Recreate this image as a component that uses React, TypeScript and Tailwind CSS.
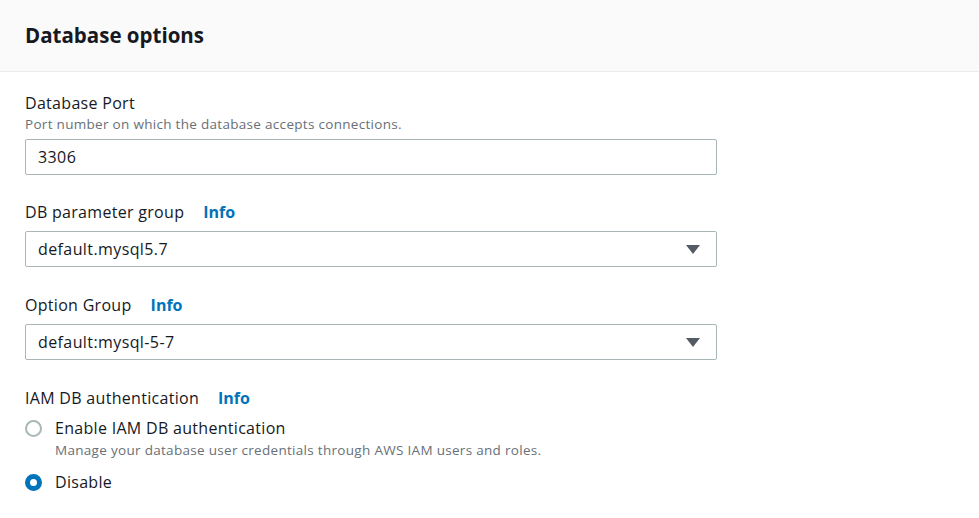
function Info() {
  return <span className="ml-[19px] font-bold tracking-normal text-[#0073bb]">Info</span>;
}

function Select({ value }: { value: string }) {
  return (
    <div className="flex h-[36px] w-[692px] items-center justify-between rounded-[2px] border border-[#aab7b8] bg-white pl-[12px] pr-[16px] text-[16px] tracking-[0.4px] text-[#16191f]">
      <span>{value}</span>
      <svg width="14" height="9" viewBox="0 0 14 9">
        <path d="M0 0h14L7 9z" fill="#545b64" />
      </svg>
    </div>
  );
}

export default function App() {
  const font = { fontFamily: '"Open Sans", "Liberation Sans", sans-serif' };
  return (
    <div className="min-h-screen w-[979px] bg-white" style={font}>
      <div className="flex h-[72px] items-center border-b border-[#eaeded] bg-[#fafafa] px-[25px]">
        <h2 className="text-[20.5px] font-bold text-[#16191f]">Database options</h2>
      </div>

      <div className="px-[25px] pt-[19px] text-[#16191f]">
        <div className="text-[16px] leading-[24px] tracking-[0.3px]">Database Port</div>
        <div className="text-[13.5px] leading-[18px] tracking-[0.3px] text-[#687078]">
          Port number on which the database accepts connections.
        </div>
        <div className="mt-[6px] flex h-[36px] w-[692px] items-center rounded-[2px] border border-[#aab7b8] px-[12px] text-[16px] tracking-[0.4px]">
          3306
        </div>

        <div className="mt-[25px] text-[16px] leading-[24px] tracking-[0.3px]">
          DB parameter group
          <Info />
        </div>
        <div className="mt-[7px]">
          <Select value="default.mysql5.7" />
        </div>

        <div className="mt-[26px] text-[16px] leading-[24px] tracking-[0.3px]">
          Option Group
          <Info />
        </div>
        <div className="mt-[7px]">
          <Select value="default:mysql-5-7" />
        </div>

        <div className="mt-[26px] text-[16px] leading-[24px] tracking-[0.3px]">
          IAM DB authentication
          <Info />
        </div>

        <div className="mt-[6px] flex items-start gap-[13px]">
          <span className="mt-[4px] h-[17px] w-[17px] shrink-0 rounded-full border-2 border-[#aab7b8] bg-white" />
          <div>
            <div className="text-[16px] leading-[24px] tracking-[0.3px]">Enable IAM DB authentication</div>
            <div className="text-[13.5px] leading-[20px] tracking-[0.3px] text-[#687078]">
              Manage your database user credentials through AWS IAM users and roles.
            </div>
          </div>
        </div>

        <div className="mt-[10px] flex items-start gap-[13px]">
          <span className="mt-[4px] h-[17px] w-[17px] shrink-0 rounded-full border-[5px] border-[#0073bb] bg-white" />
          <div className="text-[16px] leading-[24px] tracking-[0.3px]">Disable</div>
        </div>
      </div>
    </div>
  );
}
